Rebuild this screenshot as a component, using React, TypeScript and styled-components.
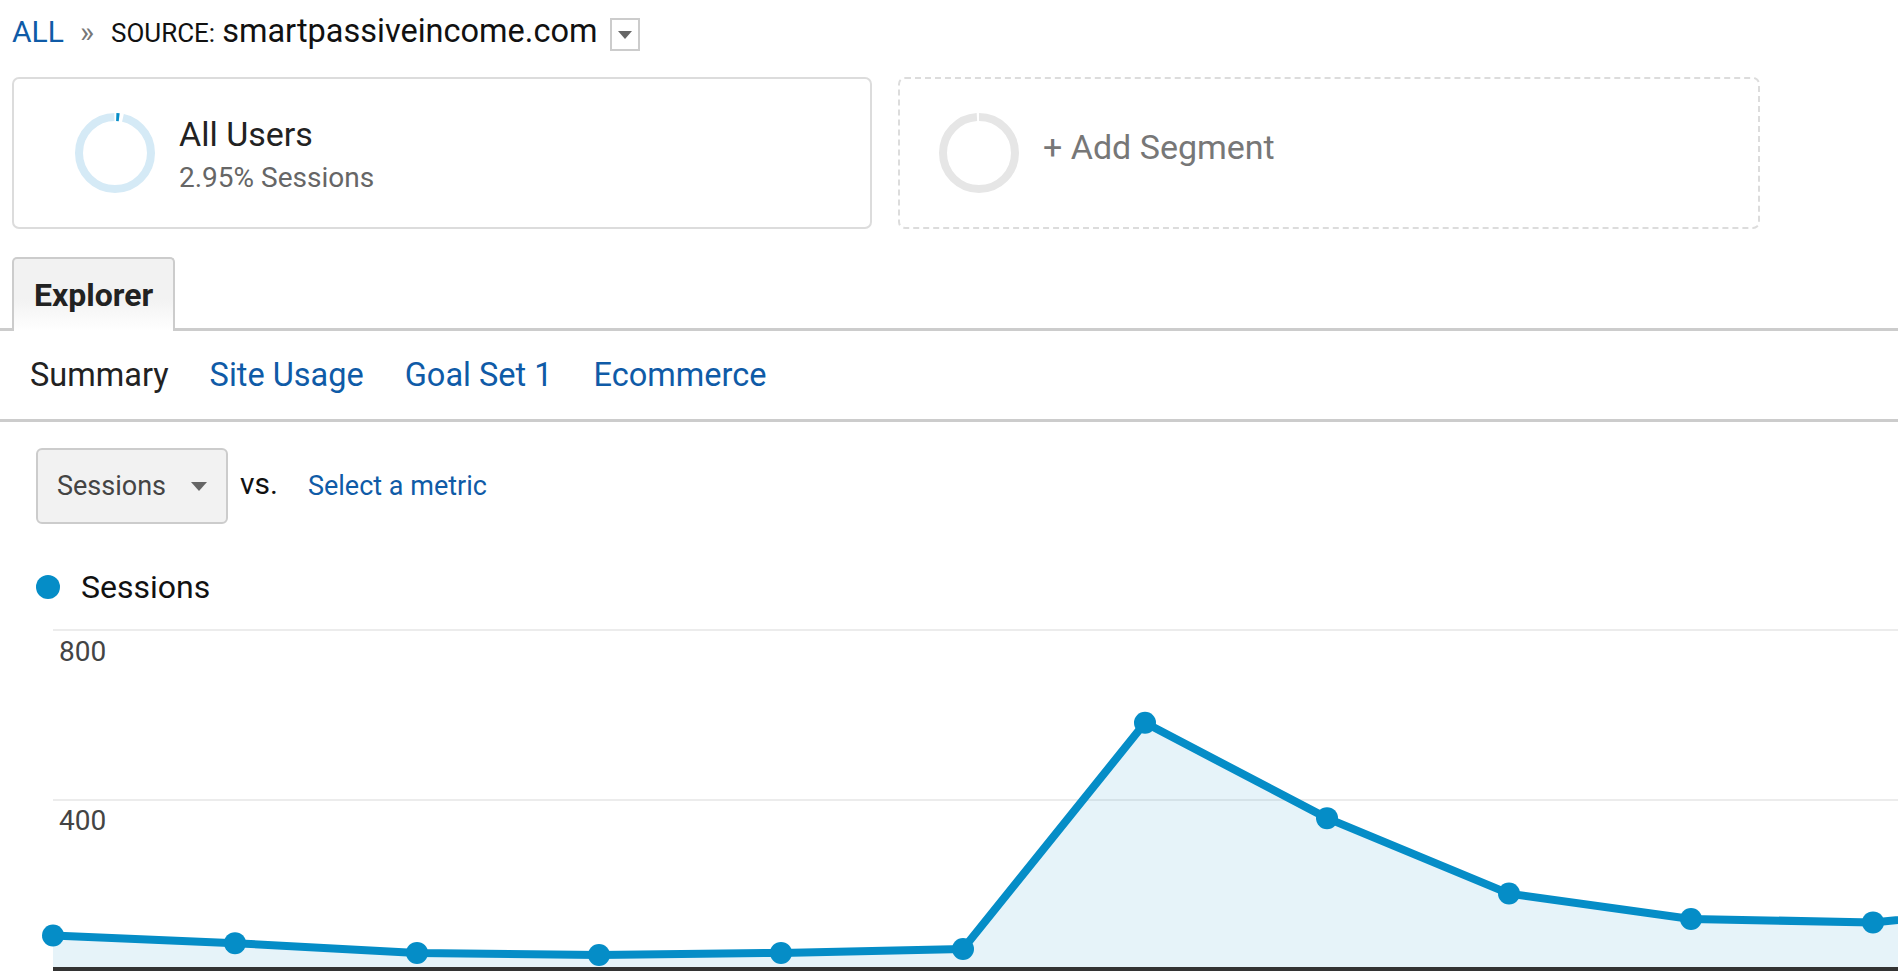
import React from "react";
import styled, { createGlobalStyle } from "styled-components";

const GlobalStyle = createGlobalStyle`
  html, body {
    margin: 0;
    padding: 0;
    background: #fff;
    overflow: hidden;
  }
  body {
    font-family: Roboto, "Liberation Sans", Arial, sans-serif;
    color: #222;
  }
`;

const Page = styled.div`
  width: 1898px;
  height: 975px;
  overflow: hidden;
`;

const Breadcrumb = styled.div`
  height: 66px;
  display: flex;
  align-items: baseline;
  padding-left: 12px;
  box-sizing: border-box;
  line-height: 62px;
`;

const CrumbLink = styled.a`
  font-size: 30px;
  color: #0f5ba7;
  text-decoration: none;
`;

const CrumbSep = styled.span`
  font-size: 30px;
  color: #777;
  margin: 0 17px 0 16px;
`;

const CrumbLabel = styled.span`
  font-size: 26px;
  color: #111;
  margin-right: 7px;
`;

const CrumbValue = styled.span`
  font-size: 32.5px;
  color: #111;
`;

const CrumbMenu = styled.span`
  align-self: flex-start;
  margin-top: 18px;
  width: 30px;
  height: 33px;
  box-sizing: border-box;
  border: 2px solid #ccc;
  margin-left: 13px;
  display: flex;
  align-items: center;
  justify-content: center;
`;

const Caret = styled.span<{ $w: number }>`
  width: 0;
  height: 0;
  border-left: ${(p) => p.$w / 2}px solid transparent;
  border-right: ${(p) => p.$w / 2}px solid transparent;
  border-top: ${(p) => Math.round(p.$w * 0.55)}px solid #666;
`;

const Segments = styled.div`
  display: flex;
  gap: 26px;
  padding-left: 12px;
  margin-top: 11px;
`;

const SegmentCard = styled.div<{ $dashed?: boolean; $pad: number; $w: number }>`
  width: ${(p) => p.$w}px;
  height: 152px;
  box-sizing: border-box;
  border: 2px ${(p) => (p.$dashed ? "dashed" : "solid")} #dcdcdc;
  border-radius: 7px;
  display: flex;
  align-items: center;
  gap: 22px;
  padding-left: ${(p) => p.$pad}px;
`;

const SegmentText = styled.div`
  display: flex;
  flex-direction: column;
  padding-top: 6px;
`;

const SegmentName = styled.div`
  font-size: 34px;
  line-height: 43px;
  color: #222;
`;

const SegmentShare = styled.div`
  font-size: 28px;
  line-height: 43px;
  color: #666;
`;

const AddSegment = styled.div`
  font-size: 34px;
  color: #777;
  margin-bottom: 12px;
`;

const TabBar = styled.div`
  margin-top: 28px;
  padding-left: 12px;
  border-bottom: 3px solid #ccc;
  display: flex;
`;

const Tab = styled.div`
  height: 74px;
  box-sizing: border-box;
  margin-bottom: -3px;
  padding: 0 20px;
  border: 2px solid #ccc;
  border-bottom: none;
  border-radius: 5px 5px 0 0;
  background: linear-gradient(to bottom, #f2f2f2 55%, #fff 100%);
  display: flex;
  align-items: center;
  font-size: 32px;
  font-weight: 700;
  color: #222;
`;

const SubTabs = styled.div`
  height: 88px;
  border-bottom: 3px solid #ccc;
  display: flex;
  align-items: center;
  gap: 41px;
  padding-left: 30px;
`;

const SubTab = styled.a<{ $active?: boolean }>`
  font-size: 32.5px;
  color: ${(p) => (p.$active ? "#222" : "#0f5ba7")};
  text-decoration: none;
`;

const Controls = styled.div`
  display: flex;
  align-items: center;
  padding: 26px 0 0 36px;
`;

const MetricSelect = styled.div`
  width: 192px;
  height: 76px;
  box-sizing: border-box;
  border: 2px solid #ccc;
  border-radius: 6px;
  background: #f2f2f2;
  display: flex;
  align-items: center;
  gap: 25px;
  padding-left: 19px;
  font-size: 27px;
  color: #444;
`;

const Versus = styled.span`
  font-size: 30px;
  color: #111;
  margin: 0 30px 6px 12px;
`;

const MetricLink = styled.a`
  font-size: 27px;
  color: #0f5ba7;
  text-decoration: none;
`;

const Legend = styled.div`
  height: 40px;
  margin-top: 43px;
  padding-left: 36px;
  display: flex;
  align-items: center;
  gap: 21px;
  font-size: 32px;
  color: #111;
`;

const LegendDot = styled.span`
  width: 24px;
  height: 24px;
  border-radius: 50%;
  background: #058dc7;
`;

const ChartWrap = styled.div`
  margin-top: 22px;
  padding-left: 40px;
  height: 346px;
  overflow: hidden;
`;

const BLUE = "#058dc7";
const sessions = [79, 61, 38, 33, 38, 47, 581, 356, 178, 118, 110, 150];

const Donut = ({ share, gray }: { share?: number; gray?: boolean }) => {
  const r = 36;
  const c = 2 * Math.PI * r;
  return (
    <svg width="84" height="84" viewBox="0 0 84 84">
      {gray ? (
        <circle
          cx="42"
          cy="42"
          r={r}
          fill="none"
          stroke="#e6e6e6"
          strokeWidth="8"
          strokeDasharray={`${c - 2.5} 2.5`}
          transform="rotate(-90 42 42)"
        />
      ) : (
        <>
          <circle cx="42" cy="42" r={r} fill="none" stroke="#d5eaf6" strokeWidth="8" />
          <circle
            cx="42"
            cy="42"
            r={r}
            fill="none"
            stroke="#fff"
            strokeWidth="9"
            strokeDasharray={`${(share || 0) * c + 2} ${c}`}
            transform="rotate(-91 42 42)"
          />
          <circle
            cx="42"
            cy="42"
            r={r}
            fill="none"
            stroke={BLUE}
            strokeWidth="8"
            strokeDasharray={`3 ${c}`}
            transform="rotate(-88 42 42)"
          />
        </>
      )}
    </svg>
  );
};

const SessionsChart = () => {
  const x0 = 13;
  const step = 182;
  const base = 340;
  const y = (v: number) => base - v * 0.42375;
  const pts = sessions.map((v, i) => [x0 + i * step, y(v)]);
  const line = pts.map((p, i) => `${i ? "L" : "M"}${p[0]} ${p[1].toFixed(1)}`).join(" ");
  const area = `${line} L${pts[pts.length - 1][0]} ${base} L${x0} ${base} Z`;
  return (
    <svg width="1858" height="346" style={{ display: "block" }}>
      <rect x={x0} y="0" width="1845" height="2" fill="#ececec" />
      <rect x={x0} y="170" width="1845" height="2" fill="#ececec" />
      <text x={x0 + 6} y="32" fontSize="28" fill="#444" fontFamily="Roboto, sans-serif">
        800
      </text>
      <text x={x0 + 6} y="201" fontSize="28" fill="#444" fontFamily="Roboto, sans-serif">
        400
      </text>
      <path d={area} fill={BLUE} fillOpacity="0.1" />
      <rect x={x0} y={base - 2} width="1845" height="4" fill="#333" />
      <path d={line} fill="none" stroke={BLUE} strokeWidth="8" strokeLinejoin="round" />
      {pts.map((p, i) => (
        <circle key={i} cx={p[0]} cy={p[1]} r="11" fill={BLUE} />
      ))}
    </svg>
  );
};

const App: React.FC = () => {
  return (
    <Page>
      <GlobalStyle />
      <Breadcrumb>
        <CrumbLink href="#">ALL</CrumbLink>
        <CrumbSep>»</CrumbSep>
        <CrumbLabel>SOURCE:</CrumbLabel>
        <CrumbValue>smartpassiveincome.com</CrumbValue>
        <CrumbMenu>
          <Caret $w={14} />
        </CrumbMenu>
      </Breadcrumb>

      <Segments>
        <SegmentCard $pad={59} $w={860}>
          <Donut share={0.0295} />
          <SegmentText>
            <SegmentName>All Users</SegmentName>
            <SegmentShare>2.95% Sessions</SegmentShare>
          </SegmentText>
        </SegmentCard>
        <SegmentCard $dashed $pad={37} $w={862}>
          <Donut gray />
          <AddSegment>+ Add Segment</AddSegment>
        </SegmentCard>
      </Segments>

      <TabBar>
        <Tab>Explorer</Tab>
      </TabBar>

      <SubTabs>
        <SubTab $active>Summary</SubTab>
        <SubTab href="#">Site Usage</SubTab>
        <SubTab href="#">Goal Set 1</SubTab>
        <SubTab href="#">Ecommerce</SubTab>
      </SubTabs>

      <Controls>
        <MetricSelect>
          Sessions
          <Caret $w={16} />
        </MetricSelect>
        <Versus>vs.</Versus>
        <MetricLink href="#">Select a metric</MetricLink>
      </Controls>

      <Legend>
        <LegendDot />
        Sessions
      </Legend>

      <ChartWrap>
        <SessionsChart />
      </ChartWrap>
    </Page>
  );
};

export default App;
